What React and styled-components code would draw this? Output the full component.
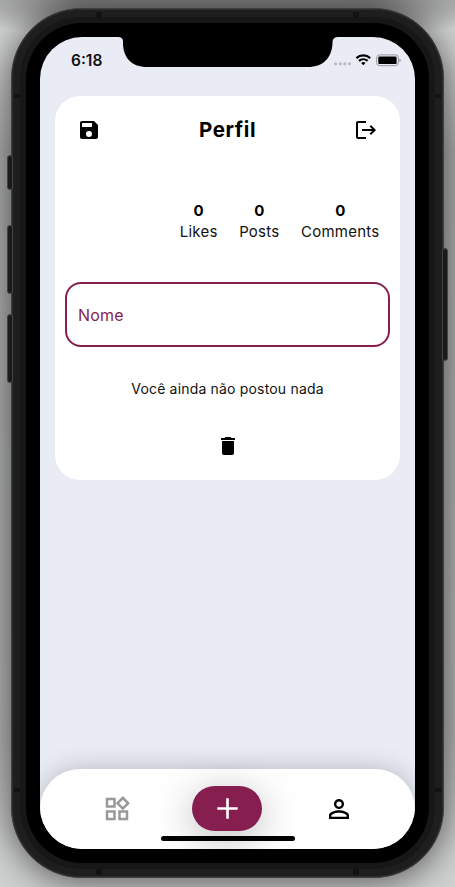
import React from 'react';
import styled, { createGlobalStyle } from 'styled-components';

const plum = '#871e50';

const GlobalStyle = createGlobalStyle`
  *, *::before, *::after { box-sizing: border-box; }
  body { margin: 0; font-family: Inter, "Liberation Sans", sans-serif; color: #111; }
`;

const Backdrop = styled.main`
  width: 455px;
  height: 887px;
  padding: 8px 11px 9px;
  overflow: hidden;
  background:
    radial-gradient(ellipse 300px 44px at 50% 0, rgba(0, 0, 0, 0.4) 50%, transparent),
    linear-gradient(transparent 50px, rgba(0, 0, 0, 0.16) 150px, rgba(0, 0, 0, 0.12) 740px, transparent 850px),
    #d0d1d1;
`;

const Phone = styled.div`
  position: relative;
  width: 433px;
  height: 870px;
  padding: 14px;
  border: 1px solid #3f3f3f;
  border-radius: 70px;
  background: #171717;
  box-shadow:
    inset 0 0 0 1px #2c2c2c,
    inset 0 0 0 8px #1e1e1e,
    0 4px 36px rgba(0, 0, 0, 0.6);
`;

const SideButton = styled.span`
  position: absolute;
  width: 6px;
  ${(p) => (p.$right ? 'right: -5px;' : 'left: -5px;')}
  top: ${(p) => p.$top}px;
  height: ${(p) => p.$height}px;
  border: 1px solid #444;
  border-radius: 3px;
  background: #1a1a1a;
`;

const AntennaBand = styled.span`
  position: absolute;
  width: 6px;
  height: ${(p) => (p.$side ? 4 : 6)}px;
  background: #121212;
  ${(p) => p.$place}
`;

const Bezel = styled.div`
  height: 840px;
  padding: 14px;
  border-radius: 56px;
  background: #000;
`;

const Screen = styled.div`
  position: relative;
  display: flex;
  flex-direction: column;
  height: 812px;
  border-radius: 42px;
  overflow: hidden;
  background: #e9ecf5;
`;

const StatusBar = styled.header`
  display: flex;
  justify-content: space-between;
  height: 59px;
  padding: 0 14px 0 31px;
`;

const Clock = styled.time`
  padding-top: 13px;
  font-size: 15.5px;
  line-height: 21px;
  font-weight: 600;
`;

const Notch = styled.svg`
  position: absolute;
  top: 0;
  left: 78px;
`;

const StatusIcons = styled.svg`
  margin-top: 14px;
`;

const Card = styled.section`
  display: flex;
  flex-direction: column;
  margin: 0 15px;
  height: 384px;
  padding: 22px 10px 0;
  border-radius: 25px;
  background: #fff;
`;

const CardHeader = styled.div`
  display: flex;
  align-items: center;
  justify-content: space-between;
  height: 24px;
  padding: 0 12px;
`;

const Title = styled.h1`
  margin: 0;
  font-size: 20.5px;
  line-height: 24px;
  font-weight: 700;
  letter-spacing: 0.6px;
  color: #000;
`;

const IconButton = styled.button`
  display: grid;
  place-items: center;
  padding: 0;
  border: 0;
  background: none;
  color: ${(p) => p.$color || '#000'};
`;

const Stats = styled.dl`
  display: flex;
  justify-content: flex-end;
  gap: 21.5px;
  margin: 58px 10.5px 0 0;
`;

const Stat = styled.div`
  display: flex;
  flex-direction: column-reverse;
  text-align: center;
`;

const StatLabel = styled.dt`
  font-size: 15px;
  line-height: 21px;
  letter-spacing: 0.25px;
`;

const StatValue = styled.dd`
  margin: 0;
  font-size: 15px;
  line-height: 21px;
  font-weight: 700;
  color: #000;
`;

const NameInput = styled.input`
  width: 325px;
  height: 65px;
  margin-top: 40px;
  padding: 0 11px;
  border: 2px solid ${plum};
  border-radius: 16px;
  outline: 0;
  background: #fff;
  font: 400 16px Inter, sans-serif;
  letter-spacing: 0.2px;
  &::placeholder { color: ${plum}; opacity: 1; }
`;

const EmptyMessage = styled.p`
  margin: 32px 0 0;
  text-align: center;
  font-size: 14px;
  line-height: 20px;
  letter-spacing: 0.18px;
`;

const DeleteRow = styled.div`
  display: flex;
  justify-content: center;
  margin-top: 35px;
`;

const TabBar = styled.nav`
  position: relative;
  display: grid;
  grid-template-columns: repeat(3, 111px);
  justify-content: center;
  align-items: center;
  height: 80px;
  margin-top: auto;
  border-radius: 40px 40px 0 0;
  background: #fff;
  box-shadow: 0 0 26px rgba(0, 0, 0, 0.22);
`;

const AddButton = styled.button`
  display: grid;
  place-items: center;
  justify-self: center;
  width: 70px;
  height: 45px;
  margin: 0 1px 1px 0;
  padding: 0;
  border: 0;
  border-radius: 23px;
  background: ${plum};
  color: #fff;
  box-shadow: 0 8px 40px rgba(0, 0, 0, 0.28);
`;

const HomeIndicator = styled.span`
  position: absolute;
  left: 121px;
  bottom: 8px;
  width: 134px;
  height: 5px;
  border-radius: 3px;
  background: #000;
`;

const icons = {
  save: 'M15 9H5V5h10m-3 14a3 3 0 1 1 0-6 3 3 0 0 1 0 6m5-16H5c-1.11 0-2 .9-2 2v14a2 2 0 0 0 2 2h14a2 2 0 0 0 2-2V7l-4-4z',
  logout: 'M17 7l-1.41 1.41L18.17 11H8v2h10.17l-2.58 2.58L17 17l5-5M4 5h8V3H4c-1.1 0-2 .9-2 2v14c0 1.1.9 2 2 2h8v-2H4V5z',
  trash: 'M19 4h-3.5l-1-1h-5l-1 1H5v2h14M6 19a2 2 0 0 0 2 2h8a2 2 0 0 0 2-2V7H6v12z',
  widgets: 'M16.66 4.52l2.83 2.83-2.83 2.83-2.83-2.83 2.83-2.83M9 5v4H5V5h4m10 10v4h-4v-4h4M9 15v4H5v-4h4m7.66-13.31L11 7.34 16.66 13l5.66-5.66-5.66-5.65zM11 3H3v8h8V3zm10 10h-8v8h8v-8zm-10 0H3v8h8v-8z',
  plus: 'M19 12.9h-6.1v6.1h-1.8v-6.1H5v-1.8h6.1V5h1.8v6.1H19z',
  person: 'M12 5.9a2.1 2.1 0 1 1 0 4.2 2.1 2.1 0 0 1 0-4.2m0 9c2.97 0 6.1 1.46 6.1 2.1v1.1H5.9V17c0-.64 3.13-2.1 6.1-2.1M12 4C9.79 4 8 5.79 8 8s1.79 4 4 4 4-1.79 4-4-1.79-4-4-4zm0 9c-2.67 0-8 1.34-8 4v3h16v-3c0-2.66-5.33-4-8-4z',
};

function Icon({ name, size = 24 }) {
  return (
    <svg width={size} height={size} viewBox="0 0 24 24" fill="currentColor" fillRule="evenodd" aria-hidden="true">
      <path d={icons[name]} />
    </svg>
  );
}

const endBands = [
  'top: 3px; left: 84px;',
  'top: 3px; right: 84px;',
  'bottom: 2px; left: 84px;',
  'bottom: 2px; right: 84px;',
];

const sideBands = [
  'top: 85px; left: 2px;',
  'top: 85px; right: 2px;',
  'bottom: 85px; left: 2px;',
  'bottom: 85px; right: 2px;',
];

const stats = [
  ['Likes', 0],
  ['Posts', 0],
  ['Comments', 0],
];

export default function App() {
  return (
    <Backdrop>
      <GlobalStyle />
      <Phone>
        <SideButton $top={146} $height={35} />
        <SideButton $top={216} $height={69} />
        <SideButton $top={305} $height={69} />
        <SideButton $right $top={239} $height={113} />
        {endBands.map((place) => <AntennaBand key={place} $place={place} />)}
        {sideBands.map((place) => <AntennaBand key={place} $side $place={place} />)}
        <Bezel>
          <Screen>
            <StatusBar>
              <Clock>6:18</Clock>
              <StatusIcons width="68" height="20" viewBox="0 0 68 20" aria-hidden="true">
                <g fill="#b9bbc3">
                  <circle cx="2.6" cy="12.8" r="1.6" />
                  <circle cx="7.3" cy="12.8" r="1.6" />
                  <circle cx="11.9" cy="12.8" r="1.6" />
                  <circle cx="16.5" cy="12.8" r="1.6" />
                </g>
                <g fill="none" stroke="#000" strokeWidth="2.2">
                  <path d="M23.4 7.1a10.2 10.2 0 0 1 13.8 0" />
                  <path d="M26 9.9a6.4 6.4 0 0 1 8.6 0" />
                </g>
                <path d="M30.3 14.2l-2.2-2.3a3.3 3.3 0 0 1 4.4 0z" />
                <rect x="43.6" y="3.9" width="21.8" height="10.8" rx="3" fill="none" stroke="#96989f" />
                <rect x="45.3" y="5.5" width="18.3" height="7.6" rx="1.2" />
                <path d="M66.4 7.4v3.8q1.4-.5 1.4-1.9t-1.4-1.9z" fill="#96989f" />
              </StatusIcons>
            </StatusBar>
            <Notch width="220" height="30" viewBox="0 0 220 30" aria-hidden="true">
              <path d="M0 0H220Q215 0 214.5 4.5V7C213.5 21 205 30 190 30H29C14 30 5.5 21 5 7V4.5Q5 0 0 0Z" />
            </Notch>
            <Card>
              <CardHeader>
                <IconButton aria-label="Salvar"><Icon name="save" /></IconButton>
                <Title>Perfil</Title>
                <IconButton aria-label="Sair"><Icon name="logout" /></IconButton>
              </CardHeader>
              <Stats>
                {stats.map(([label, value]) => (
                  <Stat key={label}>
                    <StatLabel>{label}</StatLabel>
                    <StatValue>{value}</StatValue>
                  </Stat>
                ))}
              </Stats>
              <NameInput placeholder="Nome" />
              <EmptyMessage>Você ainda não postou nada</EmptyMessage>
              <DeleteRow>
                <IconButton aria-label="Excluir"><Icon name="trash" /></IconButton>
              </DeleteRow>
            </Card>
            <TabBar>
              <IconButton $color="#999" aria-label="Feed"><Icon name="widgets" size={30} /></IconButton>
              <AddButton aria-label="Novo post"><Icon name="plus" size={35} /></AddButton>
              <IconButton aria-label="Perfil"><Icon name="person" size={30} /></IconButton>
              <HomeIndicator />
            </TabBar>
          </Screen>
        </Bezel>
      </Phone>
    </Backdrop>
  );
}
